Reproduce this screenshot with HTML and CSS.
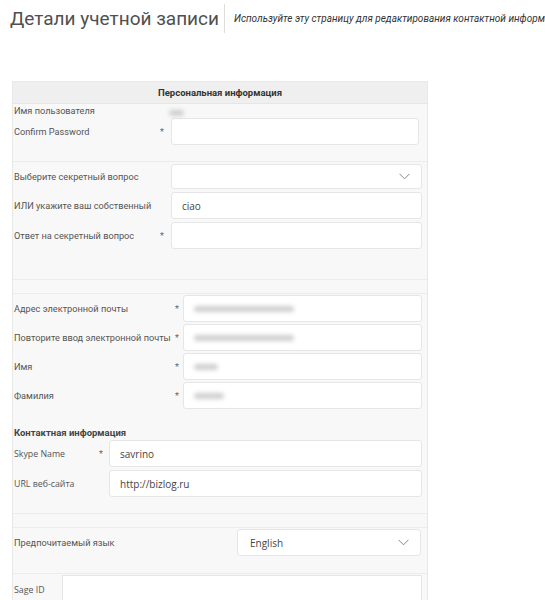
FILE: index.html
```html
<!DOCTYPE html>
<html lang="ru">
<head>
    <meta charset="UTF-8">
    <meta name="viewport" content="width=device-width, initial-scale=1.0">
    <title>Детали учетной записи</title>
    <link rel="stylesheet" href="styles.css">
</head>
<body>
    <div class="page-head">
        <h1>Детали учетной записи</h1>
        <p class="subtitle">Используйте эту страницу для редактирования контактной информации</p>
    </div>

    <div class="panel">
        <div class="panel-title">Персональная информация</div>

        <div class="section sec-login">
            <div class="label">Имя пользователя</div>
            <div class="star"></div>
            <div class="static"><span class="blur blur-user"></span></div>

            <div class="label">Confirm Password</div>
            <div class="star">*</div>
            <input class="field" type="password">
        </div>

        <div class="section sec-question">
            <div class="label">Выберите секретный вопрос</div>
            <div class="star"></div>
            <div class="select">
                <span></span>
                <svg class="chev" width="11" height="7" viewBox="0 0 11 7"><path d="M0.5 0.8 L5.5 5.8 L10.5 0.8" fill="none" stroke="#888" stroke-width="1"/></svg>
            </div>

            <div class="label">ИЛИ укажите ваш собственный</div>
            <div class="star"></div>
            <input class="field" type="text" value="ciao">

            <div class="label">Ответ на секретный вопрос</div>
            <div class="star">*</div>
            <input class="field" type="text">
        </div>

        <div class="section sec-empty"></div>

        <div class="section sec-personal">
            <div class="label">Адрес электронной почты</div>
            <div class="star">*</div>
            <div class="field"><span class="blur blur-mail"></span></div>

            <div class="label">Повторите ввод электронной почты</div>
            <div class="star">*</div>
            <div class="field"><span class="blur blur-mail"></span></div>

            <div class="label">Имя</div>
            <div class="star">*</div>
            <div class="field"><span class="blur blur-name"></span></div>

            <div class="label">Фамилия</div>
            <div class="star">*</div>
            <div class="field"><span class="blur blur-last"></span></div>
        </div>

        <div class="sub-title">Контактная информация</div>
        <div class="section sec-contact">
            <div class="label">Skype Name</div>
            <div class="star">*</div>
            <input class="field" type="text" value="savrino">

            <div class="label">URL веб-сайта</div>
            <div class="star"></div>
            <input class="field" type="text" value="http://bizlog.ru">
        </div>

        <div class="section sec-empty"></div>

        <div class="section sec-lang">
            <div class="label">Предпочитаемый язык</div>
            <div class="select">
                <span>English</span>
                <svg class="chev" width="11" height="7" viewBox="0 0 11 7"><path d="M0.5 0.8 L5.5 5.8 L10.5 0.8" fill="none" stroke="#888" stroke-width="1"/></svg>
            </div>
        </div>

        <div class="section sec-sage">
            <div class="label">Sage ID</div>
            <input class="field" type="text">
        </div>
    </div>
</body>
</html>
```

FILE: styles.css
```css
body {
    margin: 0;
    background-color: #fff;
    color: #555;
    font-family: Roboto, "Noto Sans", sans-serif;
    overflow: hidden;
}

/* page header */
.page-head {
    display: flex;
    align-items: center;
    height: 37px;
    padding-left: 10px;
    white-space: nowrap;
    overflow: hidden;
}
.page-head h1 {
    margin: 0;
    padding-right: 5px;
    font-family: Roboto, sans-serif;
    font-weight: normal;
    font-size: 19px;
    color: #505050;
    border-right: 1px solid #ddd;
    line-height: 29px;
}
.subtitle {
    margin: 0 0 0 9px;
    font-family: Roboto, sans-serif;
    font-style: italic;
    font-size: 10px;
    color: #333;
}

/* form panel */
.panel {
    margin: 44px 0 0 12px;
    width: 414px;
    background-color: #f8f8f8;
    border: 1px solid #e8e8e8;
    border-bottom: none;
}
.panel-title {
    height: 21px;
    line-height: 21px;
    text-align: center;
    background-color: #efefef;
    border-bottom: 1px solid #e6e6e6;
    font-weight: bold;
    font-size: 9.5px;
    color: #333;
}

.section {
    display: grid;
    align-items: center;
    padding-left: 1px;
    padding-right: 5px;
    border-bottom: 1px solid #ececec;
}
.label {
    font-size: 9.2px;
    color: #555;
    white-space: nowrap;
}
.star {
    font-size: 9px;
    color: #666;
}

.field {
    box-sizing: border-box;
    display: flex;
    align-items: center;
    width: 100%;
    height: 27px;
    margin: 0;
    padding: 0 10px;
    background-color: #fff;
    border: 1px solid #e6e6e6;
    border-radius: 3px;
    font-family: "Open Sans", sans-serif;
    font-size: 10px;
    color: #444;
    outline: none;
}
.select {
    box-sizing: border-box;
    display: flex;
    align-items: center;
    justify-content: space-between;
    height: 25px;
    padding: 0 11px 0 11px;
    background-color: #fff;
    border: 1px solid #e6e6e6;
    border-radius: 3px;
    font-family: "Open Sans", sans-serif;
    font-size: 10px;
    color: #444;
}

.blur {
    display: inline-block;
    height: 6px;
    border-radius: 3px;
    background-color: #cfcfcf;
    filter: blur(2px);
}
.blur-user { width: 15px; margin-left: -2px; }
.blur-mail { width: 100px; }
.blur-name { width: 24px; }
.blur-last { width: 30px; }

/* sections */
.sec-login {
    grid-template-columns: 146px 11px 248px;
    grid-template-rows: 12px 27px;
    row-gap: 2px;
    padding-top: 0;
    padding-bottom: 16px;
}
.sec-question {
    grid-template-columns: 146px 11px 251px;
    grid-template-rows: 25px 27px 27px;
    row-gap: 3px;
    padding-top: 2px;
    padding-bottom: 30px;
}
.sec-empty {
    height: 13px;
}
.sec-personal {
    grid-template-columns: 161px 8px 239px;
    grid-template-rows: 27px 27px 27px 27px;
    row-gap: 2px;
    padding-top: 1px;
    padding-bottom: 0;
    border-bottom: none;
}
.sub-title {
    padding: 18px 0 1px 1px;
    font-weight: bold;
    font-size: 9.5px;
    color: #444;
}
.sec-contact {
    grid-template-columns: 85px 10px 313px;
    grid-template-rows: 27px 27px;
    row-gap: 3px;
    padding-top: 1px;
    padding-bottom: 16px;
}
.sec-contact .label {
    font-family: "Open Sans", sans-serif;
    font-size: 8.8px;
}
.sec-lang {
    grid-template-columns: 223px 184px;
    padding-top: 1px;
    padding-bottom: 17px;
}
.sec-lang .select {
    height: 27px;
    padding-left: 12px;
}
.sec-sage {
    grid-template-columns: 48px 360px;
    padding-top: 1px;
    align-items: start;
}
.sec-sage .label {
    padding-top: 9px;
    font-family: "Open Sans", sans-serif;
    font-size: 8.8px;
}
.sec-sage .field {
    height: 40px;
    border-radius: 0;
}
```
